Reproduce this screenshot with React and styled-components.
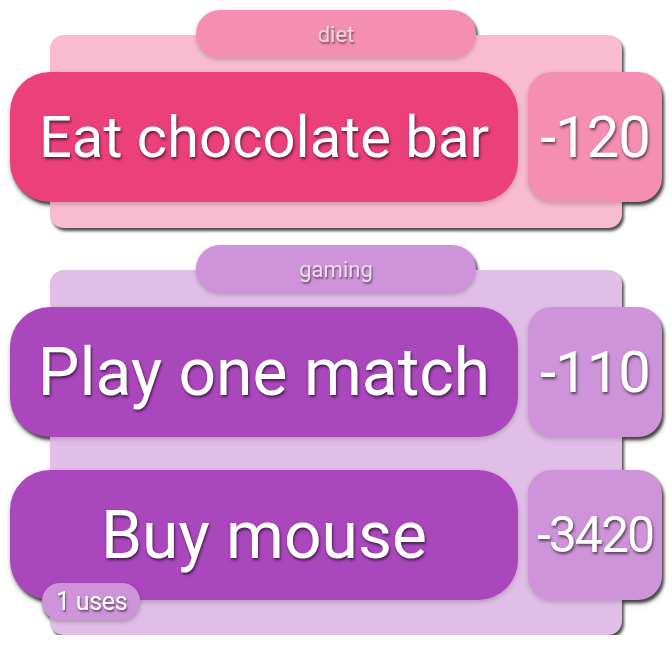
import styled, { createGlobalStyle } from 'styled-components';

const GlobalStyle = createGlobalStyle`
  body {
    margin: 0;
    background: #ffffff;
    font-family: Roboto, "Liberation Sans", sans-serif;
  }
`;

const palettes = {
  pink: { panel: '#f8bbd0', soft: '#f48fb1', strong: '#ec407a', label: '#f6d6e0' },
  purple: { panel: '#e1bee7', soft: '#ce93d8', strong: '#ab47bc', label: '#ecdcef' },
};

const groups = [
  {
    name: 'diet',
    color: 'pink',
    items: [{ title: 'Eat chocolate bar', cost: -120, size: 58 }],
  },
  {
    name: 'gaming',
    color: 'purple',
    items: [
      { title: 'Play one match', cost: -110, size: 66 },
      { title: 'Buy mouse', cost: -3420, uses: 1, size: 66 },
    ],
  },
];

const App = () => {
  return (
    <>
      <GlobalStyle />
      <Page>
        {groups.map((group) => {
          const pal = palettes[group.color];
          return (
            <Group key={group.name}>
              <Header $bg={pal.soft} $fg={pal.label}>{group.name}</Header>
              <Panel $bg={pal.panel}>
                {group.items.map((item) => (
                  <Row key={item.title} $withBadge={!!item.uses}>
                    <Title $bg={pal.strong} $size={item.size}>{item.title}</Title>
                    <Cost $bg={pal.soft} $small={String(item.cost).length > 4}>
                      {item.cost}
                    </Cost>
                    {item.uses && <Uses $bg={pal.soft}>{item.uses} uses</Uses>}
                  </Row>
                ))}
              </Panel>
            </Group>
          );
        })}
      </Page>
    </>
  );
};

export default App;

const Page = styled.div`
  width: 652px;
  padding: 10px 0 0 10px;
  display: flex;
  flex-direction: column;
  gap: 17px;
`;

const Group = styled.div`
  display: flex;
  flex-direction: column;
  align-items: center;
  filter: drop-shadow(2px 3px 1.5px rgba(0, 0, 0, 0.7));
`;

const Header = styled.div`
  position: relative;
  z-index: 1;
  width: 280px;
  height: 48px;
  border-radius: 24px;
  background: ${(p) => p.$bg};
  color: ${(p) => p.$fg};
  display: flex;
  align-items: center;
  justify-content: center;
  font-size: 22px;
  text-shadow: 1px 2px 2px rgba(0, 0, 0, 0.5);
  box-shadow: 0 2px 4px rgba(0, 0, 0, 0.2);
`;

const Panel = styled.div`
  align-self: stretch;
  margin: -23px 40px 0;
  padding: 37px 0 26px;
  border-radius: 14px;
  background: ${(p) => p.$bg};
  display: flex;
  flex-direction: column;
  gap: 33px;
`;

const Row = styled.div`
  position: relative;
  margin: 0 -40px ${(p) => (p.$withBadge ? '9px' : '0')};
  display: flex;
  gap: 10px;
  height: 130px;
`;

const Title = styled.div`
  flex: 1;
  border-radius: 40px;
  background: ${(p) => p.$bg};
  color: #ffffff;
  display: flex;
  align-items: center;
  justify-content: center;
  font-size: ${(p) => p.$size}px;
  white-space: nowrap;
  text-shadow: 1px 2px 3px rgba(0, 0, 0, 0.6);
  box-shadow: 0 2px 5px rgba(0, 0, 0, 0.2);
`;

const Cost = styled.div`
  width: 134px;
  border-radius: 24px;
  background: ${(p) => p.$bg};
  color: #ffffff;
  display: flex;
  align-items: center;
  justify-content: center;
  font-size: ${(p) => (p.$small ? '50px' : '58px')};
  letter-spacing: ${(p) => (p.$small ? '-2px' : '-1px')};
  text-shadow: 1px 2px 3px rgba(0, 0, 0, 0.6);
  box-shadow: 0 2px 5px rgba(0, 0, 0, 0.2);
`;

const Uses = styled.div`
  position: absolute;
  left: 32px;
  bottom: -20px;
  height: 37px;
  padding: 0 13px 0 14px;
  border-radius: 18px;
  background: ${(p) => p.$bg};
  color: #ffffff;
  display: flex;
  align-items: center;
  font-size: 25px;
  letter-spacing: -0.3px;
  text-shadow: 1px 2px 2px rgba(0, 0, 0, 0.5);
  box-shadow: 0 2px 4px rgba(0, 0, 0, 0.25);
`;
